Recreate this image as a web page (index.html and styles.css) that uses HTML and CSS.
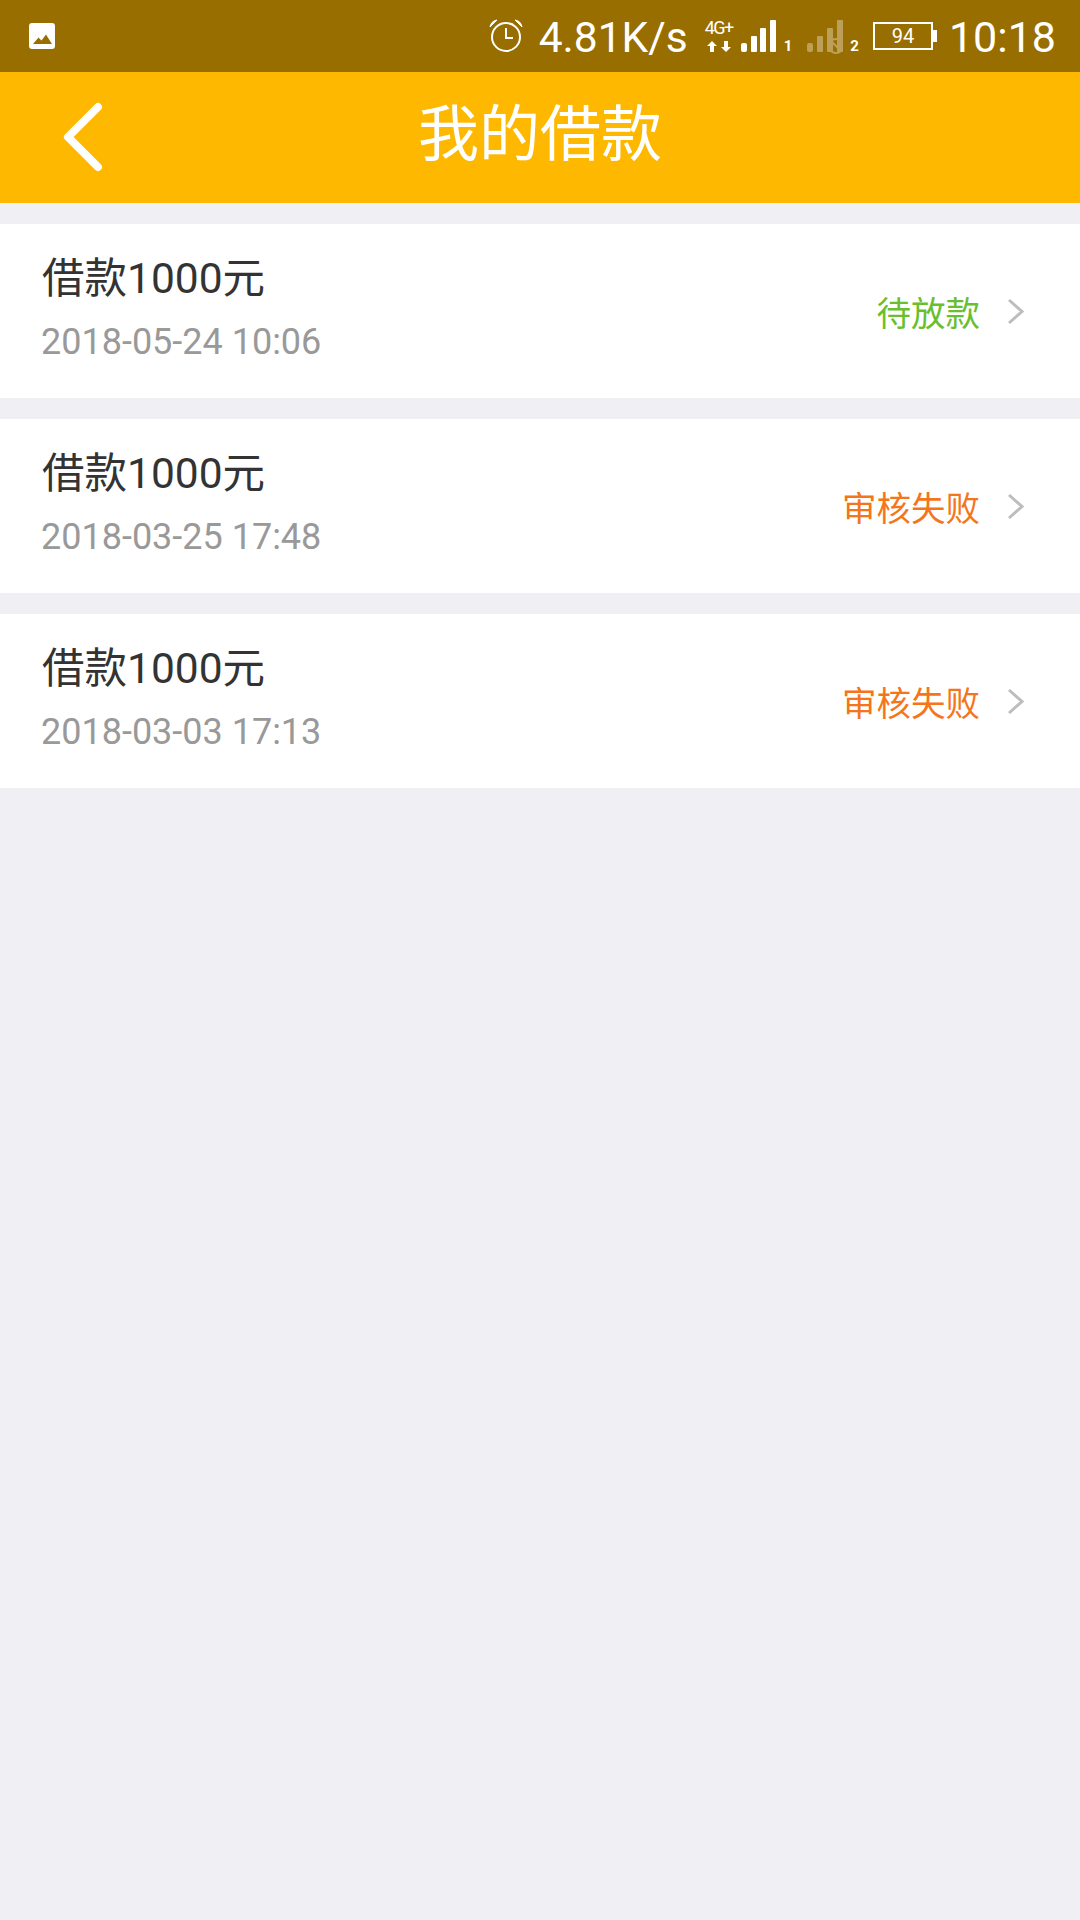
FILE: index.html
```html
<!DOCTYPE html>
<html lang="zh-CN">
<head>
  <meta charset="UTF-8" />
  <meta name="viewport" content="width=device-width, initial-scale=1.0"/>
  <title>我的借款</title>
  <link rel="stylesheet" href="styles.css">
</head>
<body>
  <!-- Status bar -->
  <div class="status-bar">
    <svg class="pic-icon" width="26" height="26" viewBox="0 0 26 26">
      <rect width="26" height="26" rx="3" fill="#fff"/>
      <path d="M4 21 L9.500 14.500 L12.500 17.500 L17 11.500 L23 21 Z" fill="#996e00"/>
    </svg>
    <div class="status-right">
      <svg class="alarm" width="34" height="34" viewBox="0 0 34 34" fill="none" stroke="#fff">
        <circle cx="17" cy="18" r="14" stroke-width="2"/>
        <path d="M17 9 V19 H24" stroke-width="2"/>
        <path d="M1 8 Q2 2 8 1 Z M33 8 Q32 2 26 1 Z" fill="#fff" stroke-width="1"/>
      </svg>
      <span class="speed">4.81K/s</span>
      <div class="net">
        <span class="net-label">4G+</span>
        <svg width="24" height="11" viewBox="0 0 24 11" fill="#fff">
          <path d="M5 0 L10 5 H7 V11 H3 V5 H0 Z M19 11 L14 6 H17 V0 H21 V6 H24 Z"/>
        </svg>
      </div>
      <svg class="signal" width="35" height="32" viewBox="0 0 35 32" fill="#fff">
        <rect x="0" y="23" width="6" height="9" rx="2"/>
        <rect x="10" y="16" width="6" height="16" rx="1"/>
        <rect x="19" y="8" width="6" height="24" rx="1"/>
        <rect x="29" y="0" width="6" height="32" rx="1"/>
      </svg>
      <span class="sim">1</span>
      <svg class="signal signal-off" width="36" height="34" viewBox="0 0 36 34" fill="#fff">
        <g opacity="0.35">
          <rect x="0" y="23" width="6" height="9" rx="2"/>
          <rect x="10" y="16" width="6" height="16" rx="1"/>
          <rect x="20" y="8" width="6" height="24" rx="1"/>
          <rect x="30" y="0" width="6" height="32" rx="1"/>
          <circle cx="29" cy="26" r="7" fill="none" stroke="#fff" stroke-width="2"/>
          <path d="M24 21 L34 31" stroke="#fff" stroke-width="2"/>
        </g>
      </svg>
      <span class="sim sim-two">2</span>
      <div class="battery">
        <span class="battery-body">94</span>
        <span class="battery-tip"></span>
      </div>
      <span class="clock">10:18</span>
    </div>
  </div>

  <header class="topbar">
    <svg class="back" width="44" height="72" viewBox="0 0 44 72" fill="none" stroke="#fff" stroke-width="8" stroke-linecap="round" stroke-linejoin="round">
      <path d="M36 6 L6 36 L36 66"/>
    </svg>
    <h1>我的借款</h1>
  </header>

  <main class="loan-list">
    <div class="loan">
      <div class="loan-info">
        <div class="loan-title">借款1000元</div>
        <div class="loan-date">2018-05-24 10:06</div>
      </div>
      <span class="loan-status pending">待放款</span>
      <svg class="arrow" width="18" height="27" viewBox="0 0 18 27" fill="none" stroke="#bdbdbd" stroke-width="3"><path d="M2 2 L15 13.500 L2 25"/></svg>
    </div>
    <div class="loan">
      <div class="loan-info">
        <div class="loan-title">借款1000元</div>
        <div class="loan-date">2018-03-25 17:48</div>
      </div>
      <span class="loan-status failed">审核失败</span>
      <svg class="arrow" width="18" height="27" viewBox="0 0 18 27" fill="none" stroke="#bdbdbd" stroke-width="3"><path d="M2 2 L15 13.500 L2 25"/></svg>
    </div>
    <div class="loan">
      <div class="loan-info">
        <div class="loan-title">借款1000元</div>
        <div class="loan-date">2018-03-03 17:13</div>
      </div>
      <span class="loan-status failed">审核失败</span>
      <svg class="arrow" width="18" height="27" viewBox="0 0 18 27" fill="none" stroke="#bdbdbd" stroke-width="3"><path d="M2 2 L15 13.500 L2 25"/></svg>
    </div>
  </main>
</body>
</html>
```

FILE: styles.css
```css
* { box-sizing: border-box; margin: 0; padding: 0; }
html, body { height: 100%; }
body {
  font-family: Roboto, "Noto Sans CJK SC", sans-serif;
  background: #efeff4; color: #333;
}
svg { display: block; flex: none; }

/* Status bar */
.status-bar {
  display: flex; align-items: center; justify-content: space-between;
  height: 72px; padding: 0 24px 0 29px;
  background: #996e00; color: #fff;
}
.status-right { display: flex; align-items: center; }
.alarm { margin-right: 16px; }
.speed { font-size: 42.5px; margin-right: 17px; position: relative; top: 1px; }
.net { display: flex; flex-direction: column; align-items: center; gap: 6px; margin-right: 8px; width: 28px; }
.net-label { font-size: 18px; line-height: 14px; white-space: nowrap; letter-spacing: -1.5px; }
.sim { font-size: 15px; font-weight: bold; align-self: flex-end; margin: 0 15px 8px 8px; line-height: 14px; }
.sim-two { margin: 0 14px 8px 7px; }
.signal-off { margin-top: 2px; }
.battery { display: flex; align-items: center; margin-right: 12px; }
.battery-body {
  width: 60px; height: 28px; border: 2px solid #fff;
  font-size: 20px; line-height: 24px; text-align: center;
}
.battery-tip { width: 4px; height: 12px; background: #fff; }
.clock { font-size: 43px; position: relative; top: 1px; }

/* Top bar */
.topbar {
  position: relative;
  display: flex; align-items: center; justify-content: center;
  height: 131px; background: #ffb800; color: #fff;
}
.topbar h1 { font-size: 61px; font-weight: normal; line-height: 72px; margin-top: -5px; }
.back { position: absolute; left: 62px; top: 29px; }

/* Loan rows */
.loan-list { display: flex; flex-direction: column; gap: 21px; padding-top: 21px; }
.loan {
  display: flex; align-items: center;
  height: 174px; padding: 0 55px 0 41px; background: #fff;
}
.loan-info { flex: 1; }
.loan-title { font-size: 42.5px; line-height: 56px; margin: -6px 0 0 1px; }
.loan-date { font-size: 36px; line-height: 46px; margin-top: 12px; color: #999; }
.loan-status { font-size: 34.5px; margin-right: 27px; }
.pending { color: #6abf2e; }
.failed { color: #f5761a; }
```
